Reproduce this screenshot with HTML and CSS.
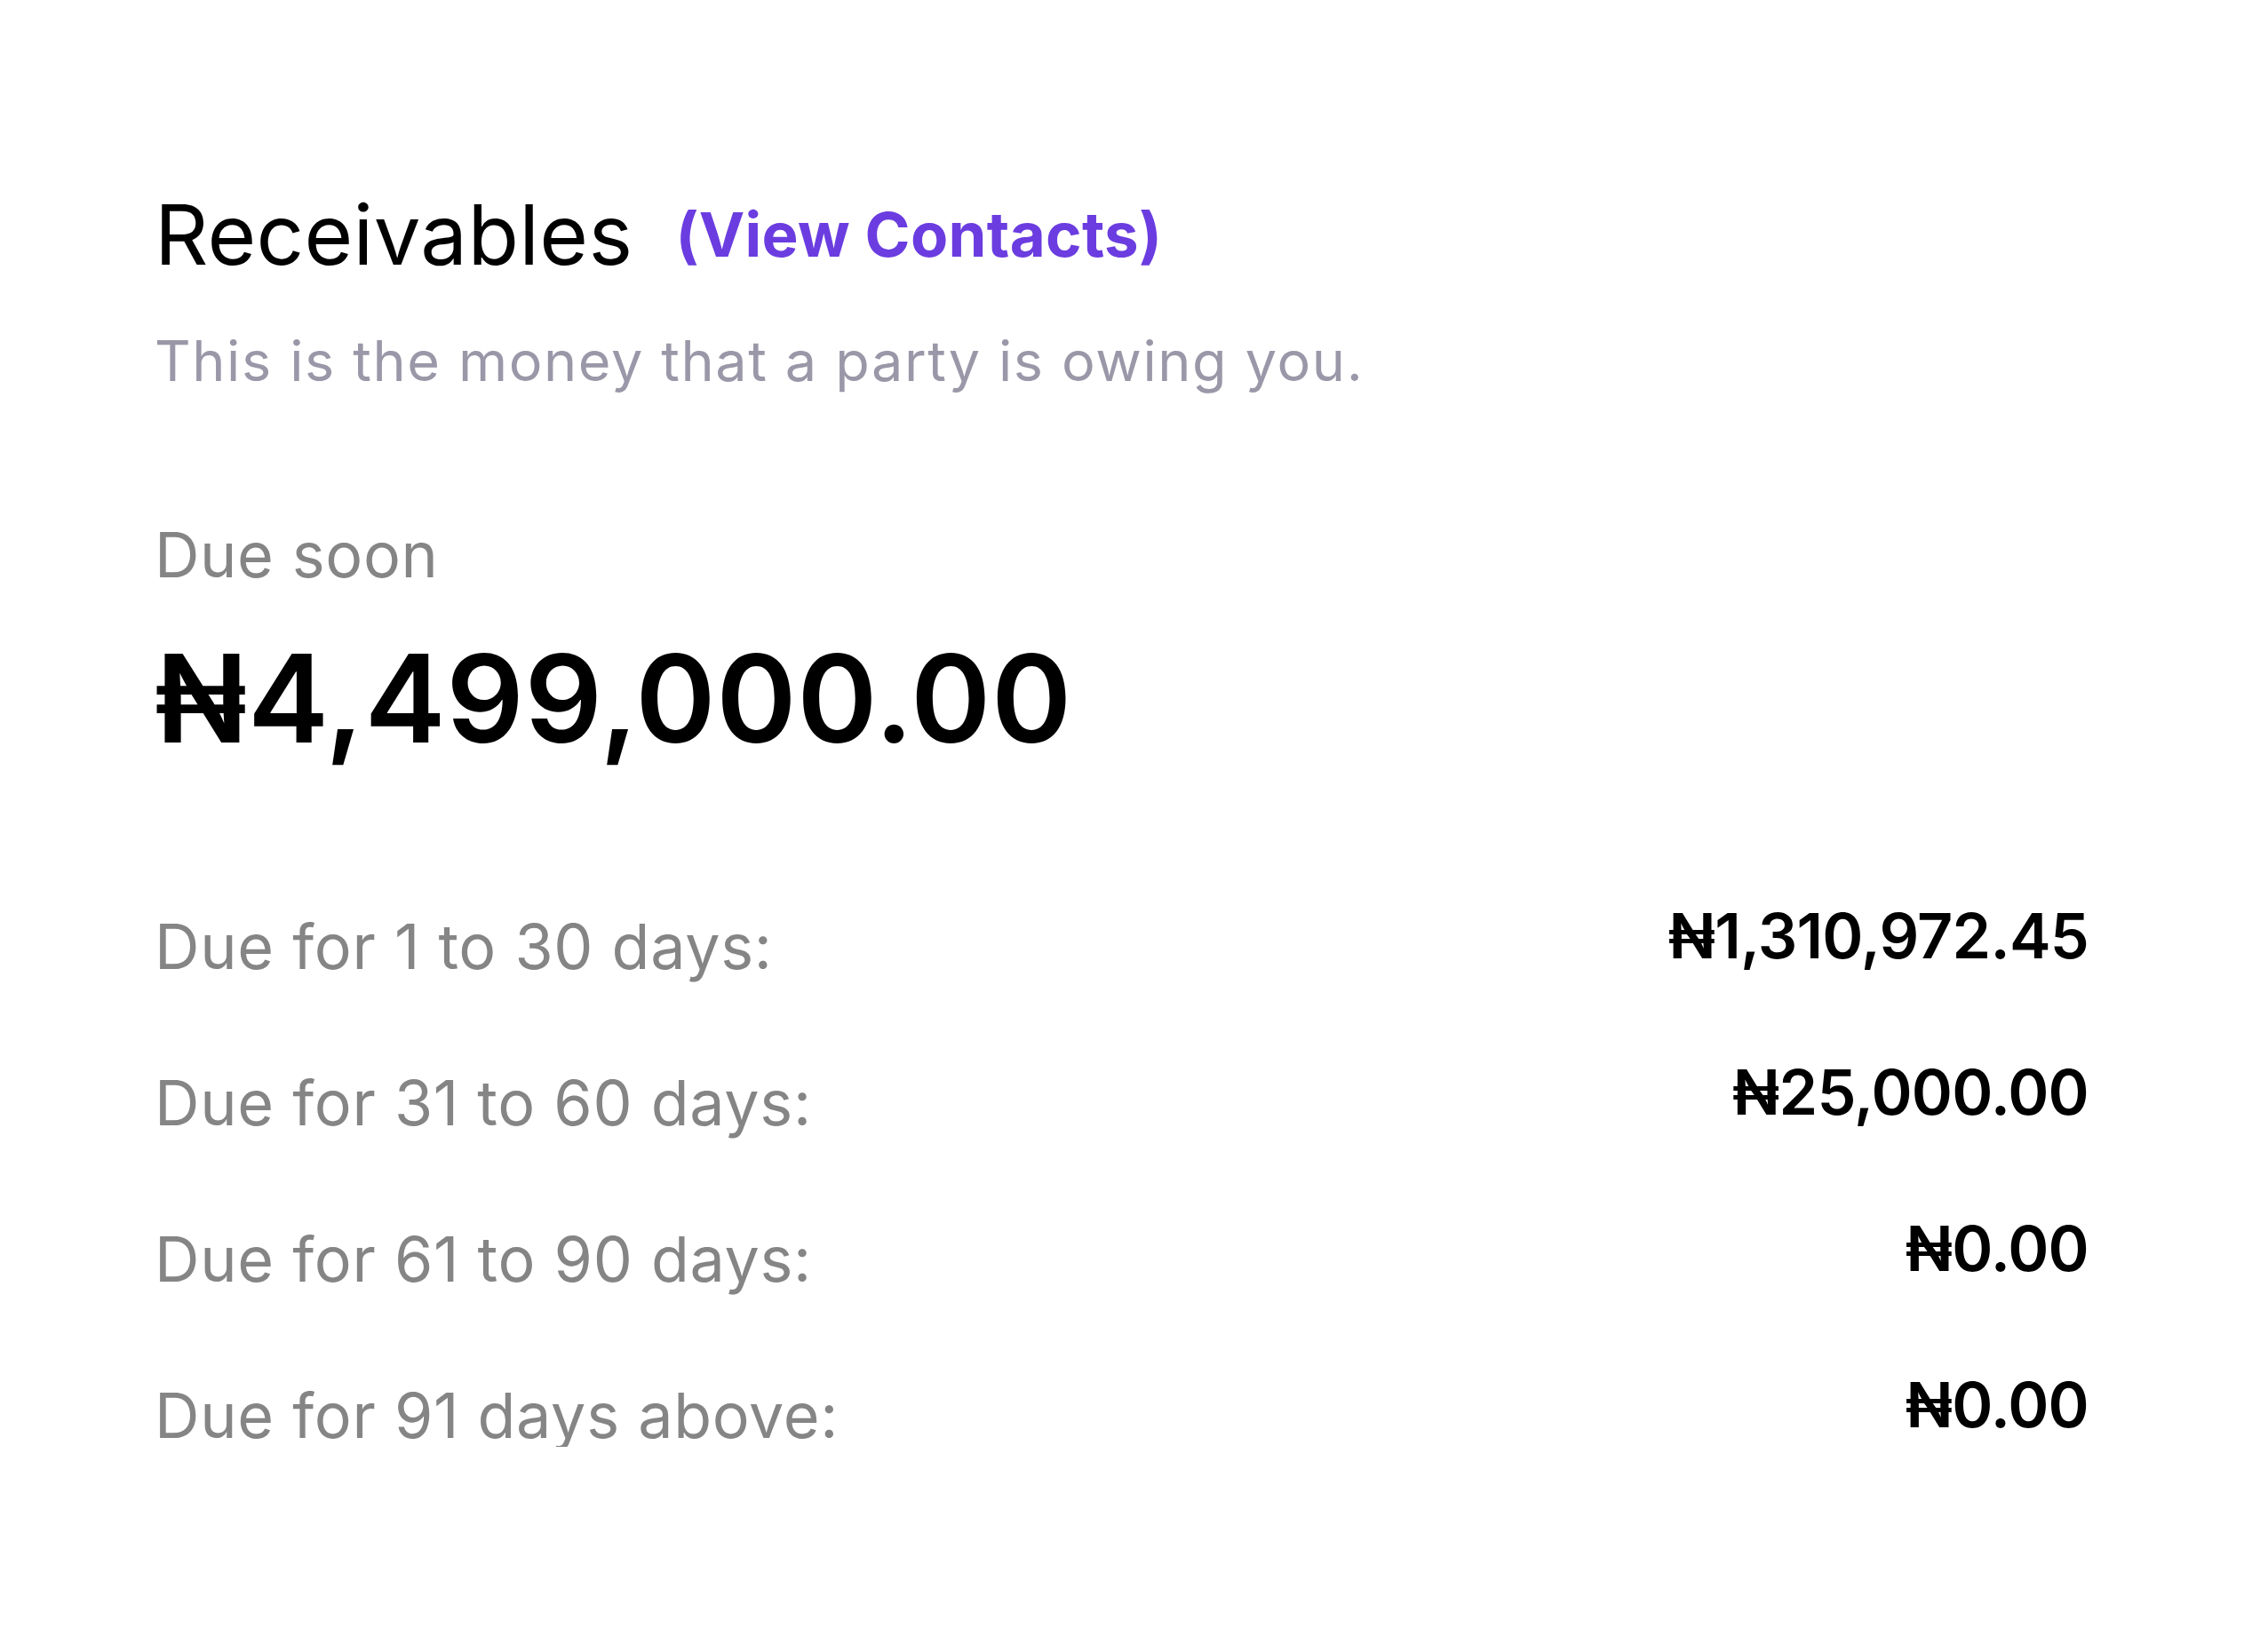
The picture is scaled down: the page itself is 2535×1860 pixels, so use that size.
FILE: index.html
```html
<!DOCTYPE html>
<html lang="en">
<head>
<meta charset="utf-8">
<title>Receivables</title>
<link rel="stylesheet" href="styles.css">
</head>
<body>
<main class="card">
  <header class="head">
    <h1 class="title">Receivables</h1>
    <a class="link" href="#">(View Contacts)</a>
  </header>
  <p class="subtitle">This is the money that a party is owing you.</p>
  <p class="due-label">Due soon</p>
  <p class="total">₦4,499,000.00</p>
  <ul class="rows">
    <li class="row"><span class="label">Due for 1 to 30 days:</span><span class="value">₦1,310,972.45</span></li>
    <li class="row"><span class="label">Due for 31 to 60 days:</span><span class="value">₦25,000.00</span></li>
    <li class="row"><span class="label">Due for 61 to 90 days:</span><span class="value">₦0.00</span></li>
    <li class="row"><span class="label">Due for 91 days above:</span><span class="value">₦0.00</span></li>
  </ul>
</main>
</body>
</html>
```

FILE: styles.css
```css
html, body {
  margin: 0;
  padding: 0;
  background: #ffffff;
}

body {
  font-family: "Inter", "Liberation Sans", sans-serif;
  color: #000000;
}

.card {
  width: 2535px;
  box-sizing: border-box;
  padding: 217px 184px 0 174px;
}

.head {
  display: flex;
  align-items: center;
  gap: 48px;
}

.title {
  margin: 0;
  font-size: 94px;
  line-height: 94px;
  font-weight: 400;
  letter-spacing: 0.3px;
  color: #000000;
}

.link {
  font-size: 69px;
  line-height: 69px;
  font-weight: 700;
  letter-spacing: 0.3px;
  color: #6b3de0;
  text-decoration: none;
}

.subtitle {
  margin: 64px 0 0 0;
  font-size: 63px;
  line-height: 63px;
  letter-spacing: 1.6px;
  color: #9a98a8;
}

.due-label {
  margin: 152px 0 0 0;
  font-size: 70px;
  line-height: 70px;
  letter-spacing: 0.6px;
  color: #858585;
}

.total {
  margin: 58px 0 0 0;
  font-size: 137px;
  line-height: 137px;
  font-weight: 600;
  letter-spacing: 0.6px;
}

.rows {
  list-style: none;
  margin: 176px 0 0 0;
  padding: 0;
  display: flex;
  flex-direction: column;
  gap: 106px;
}

.row {
  display: flex;
  justify-content: space-between;
  align-items: flex-start;
}

.label {
  font-size: 70px;
  line-height: 70px;
  letter-spacing: 0.7px;
  color: #858585;
}

.value {
  font-size: 70px;
  line-height: 46px;
  font-weight: 600;
  letter-spacing: -0.8px;
}
```
